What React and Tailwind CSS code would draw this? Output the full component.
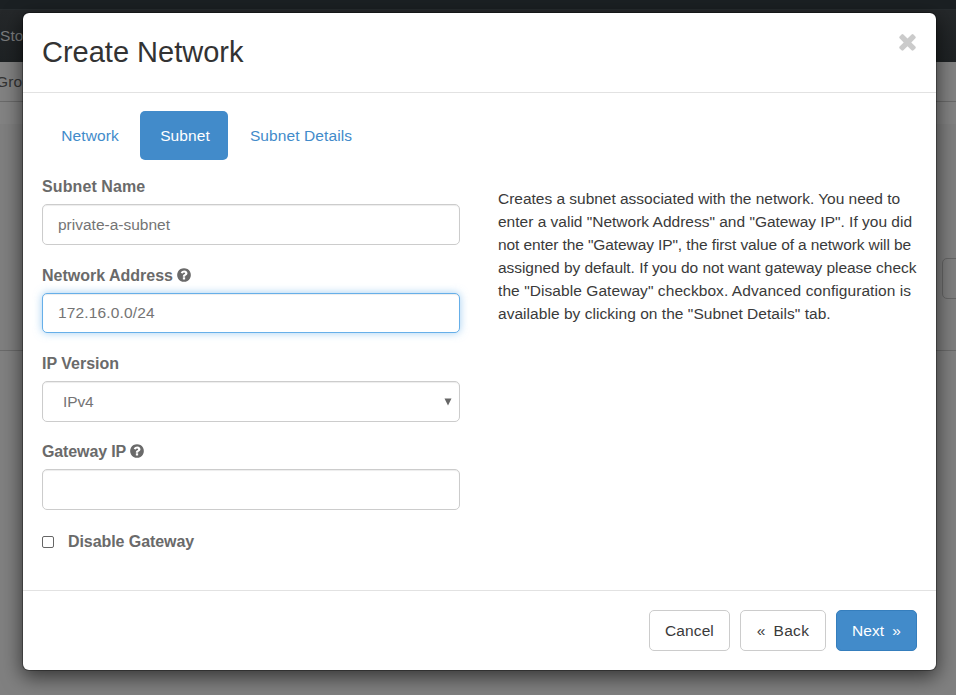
import React from "react";

const QUESTION =
  "M1024 1376v-192q0-14-9-23t-23-9H800q-14 0-23 9t-9 23v192q0 14 9 23t23 9h192q14 0 23-9t9-23zm256-672q0-88-55.5-163T1086 425t-170-41q-243 0-371 213-15 24 8 42l132 100q7 6 19 6 16 0 25-12 53-68 86-92 34-24 86-24 48 0 85.5 26t37.5 59q0 38-20 61t-68 45q-63 28-115.5 86.5T768 1020v36q0 14 9 23t23 9h192q14 0 23-9t9-23q0-19 21.5-49.5T1100 957q32-18 49-28.5t46-35 44.5-48 28-60.5 12.5-81zm384 192q0 209-103 385.5T1281.5 1561 896 1664t-385.5-103T231 1281.5 128 896t103-385.5T510.5 231 896 128t385.5 103T1561 510.5 1664 896z";
const TIMES =
  "M1490 1322q0 40-28 68l-136 136q-28 28-68 28t-68-28l-294-294-294 294q-28 28-68 28t-68-28l-136-136q-28-28-28-68t28-68l294-294-294-294q-28-28-28-68t28-68l136-136q28-28 68-28t68 28l294 294 294-294q28-28 68-28t68 28l136 136q28 28 28 68t-28 68l-294 294 294 294q28 28 28 68z";

function Icon({ d, className }) {
  return (
    <svg viewBox="0 0 1792 1792" fill="currentColor" className={className}>
      <path d={d} />
    </svg>
  );
}

function Label({ children, help, tracking = "tracking-normal" }) {
  return (
    <div className="flex h-[23px] items-center gap-[3px] whitespace-nowrap text-[16px] font-bold text-[#6a6a6a]">
      <span className={tracking}>{children}</span>
      {help && <Icon d={QUESTION} className="mb-px size-4" />}
    </div>
  );
}

const box = "flex items-center rounded-[5px] border bg-white px-[15px] text-[#747474]";
const plain = "border-[#cccccc] shadow-[inset_0_1px_1px_rgba(0,0,0,0.075)]";

function Backdrop() {
  return (
    <div className="flex h-full flex-col bg-[#808080]">
      <div className="h-[9px] bg-[#1b2023]" />
      <div className="flex h-[53px] items-center border-t border-[#272c2f] bg-linear-to-b from-[#25282a] to-[#1e2224] pb-px text-[#7c7d7e]">
        Sto
      </div>
      <div className="flex h-10 items-center border-b border-[#6a6a6a] bg-[#828282] text-[#333]">
        <span className="-ml-1">Gro</span>
      </div>
      <div className="h-[22px] bg-[#838383]" />
      <div className="flex h-[227px] items-end justify-end border-b border-[#6a6a6a] bg-[#7f7f7f] pb-[51px]">
        <div className="-mr-5 h-[41px] w-[34px] rounded-[5px] border border-[#666]" />
      </div>
    </div>
  );
}

export default function App() {
  return (
    <div className="relative h-[695px] w-[956px] overflow-hidden font-['Liberation_Sans',Arial,sans-serif] text-[15.5px] leading-[23px] tracking-[0.1px]">
      <Backdrop />
      <div className="absolute left-[22px] top-3 flex h-[659px] w-[915px] flex-col rounded-[7px] border border-black/30 bg-white bg-clip-padding shadow-[0_6px_20px_rgba(0,0,0,0.6)]">
        <header className="flex h-20 justify-between border-b border-[#e2e2e2] pl-[19px] pr-4">
          <h1 className="pt-[23px] text-[29px] leading-8 tracking-normal text-[#333]">Create Network</h1>
          <Icon d={TIMES} className="mt-[15.5px] size-[25px] text-[#cbcbcb]" />
        </header>

        <main className="h-[497px] px-[19px] pt-[18px]">
          <nav className="flex h-[49px] items-stretch gap-[2px] text-[#428bca]">
            <a className="flex w-24 items-center justify-center">Network</a>
            <a className="flex w-[88px] items-center justify-center rounded-[5px] bg-[#428bca] pl-[2px] text-white">Subnet</a>
            <a className="flex w-[142px] items-center justify-center">Subnet Details</a>
          </nav>
          <div className="flex gap-[38px] pt-[15px]">
            <div className="flex w-[418px] shrink-0 flex-col">
              <Label tracking="tracking-[0.1px]">Subnet Name</Label>
              <div className={`${box} ${plain} mt-[6px] h-[41px] tracking-normal`}>private-a-subnet</div>
              <div className="h-[19px]" />
              <Label help>Network Address</Label>
              <div className={`${box} mt-[6px] h-10 border-[#66afe9] pb-px tracking-[0.15px] shadow-[inset_0_1px_1px_rgba(0,0,0,0.075),0_0_8px_rgba(102,175,233,0.6)]`}>
                172.16.0.0/24
              </div>
              <div className="h-[19px]" />
              <Label>IP Version</Label>
              <div className={`${box} ${plain} mt-[6px] h-[41px] justify-between pl-5 pr-[7px]`}>
                <span className="tracking-[-0.1px]">IPv4</span>
                <svg viewBox="0 0 8 8" className="h-2 w-2 fill-[#666]">
                  <path d="M0.5 0.5H7.5L4 7.5Z" />
                </svg>
              </div>
              <div className="h-[18px]" />
              <Label help tracking="tracking-[-0.12px]">Gateway IP</Label>
              <div className={`${box} ${plain} mt-[6px] h-[41px]`} />
              <div className="mt-5 flex items-center gap-[14px] text-[16px] font-bold tracking-[-0.07px] text-[#6a6a6a]">
                <span className="size-3 rounded-[2px] border border-[#666]" />
                <span>Disable Gateway</span>
              </div>
            </div>
            <div className="w-[418px] shrink-0 whitespace-nowrap pt-3 text-[#3a3a3a]">
              <div className="tracking-[-0.02px]">Creates a subnet associated with the network. You need to</div>
              <div className="tracking-[0px]">enter a valid "Network Address" and "Gateway IP". If you did</div>
              <div className="tracking-[-0.1px]">not enter the "Gateway IP", the first value of a network will be</div>
              <div className="tracking-[-0.05px]">assigned by default. If you do not want gateway please check</div>
              <div className="tracking-[0.07px]">the "Disable Gateway" checkbox. Advanced configuration is</div>
              <div className="tracking-[0.04px]">available by clicking on the "Subnet Details" tab.</div>
            </div>
          </div>
        </main>

        <footer className="flex h-20 justify-end gap-[10px] border-t border-[#e2e2e2] pr-[19px] pt-[19px] text-[#3a3a3a]">
          <button className="h-[41px] w-[81px] rounded-[5px] border border-[#ccc]">Cancel</button>
          <button className="flex h-[41px] w-[86px] items-center justify-center gap-2 rounded-[5px] border border-[#ccc]">
            <span>«</span>
            <span className="tracking-[0.3px]">Back</span>
          </button>
          <button className="flex h-[41px] w-[81px] items-center justify-center gap-2 rounded-[5px] border border-[#357ebd] bg-[#428bca] text-white">
            <span>Next</span>
            <span>»</span>
          </button>
        </footer>
      </div>
    </div>
  );
}
